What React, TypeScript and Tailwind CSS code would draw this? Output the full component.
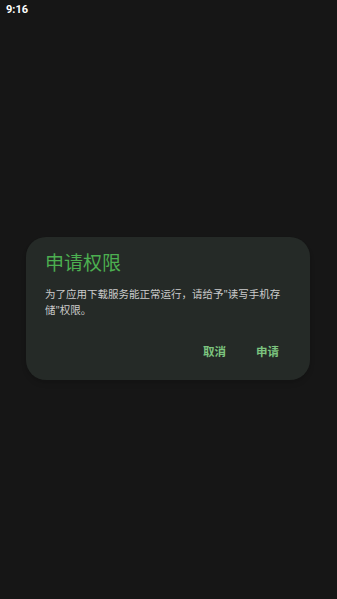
import React from 'react';

const cjk = { fontFamily: '"Noto Sans", "Noto Sans CJK SC", sans-serif' };

export default function App() {
    return (
        <div className="min-h-screen w-full bg-[#161616] flex flex-col" style={cjk}>
            {/* Status bar */}
            <div className="h-[20px] px-[6px] flex items-center">
                <span className="text-white text-[11px] font-bold font-['Roboto',sans-serif]">9:16</span>
            </div>

            {/* Dialog */}
            <div className="pt-[217px] px-[26px] flex">
                <div className="w-[284px] rounded-[20px] bg-[#252a27] pt-[14px] pb-[10px] shadow-md">
                    <h2 className="pl-[19px] text-[19px] leading-[24px] text-[#4caf50]">
                        申请权限
                    </h2>
                    <p className="pl-[19px] pr-[24px] mt-[11px] text-[10.5px] leading-[16px] text-[#cccccc]">
                        为了应用下载服务能正常运行，请给予"读写手机存储"权限。
                    </p>
                    <div className="mt-[16px] pr-[19px] flex justify-end gap-[6px]">
                        <button className="h-[36px] px-3 text-[11.5px] font-bold text-[#7cc47f]">
                            取消
                        </button>
                        <button className="h-[36px] px-3 text-[11.5px] font-bold text-[#7cc47f]">
                            申请
                        </button>
                    </div>
                </div>
            </div>
        </div>
    );
}
